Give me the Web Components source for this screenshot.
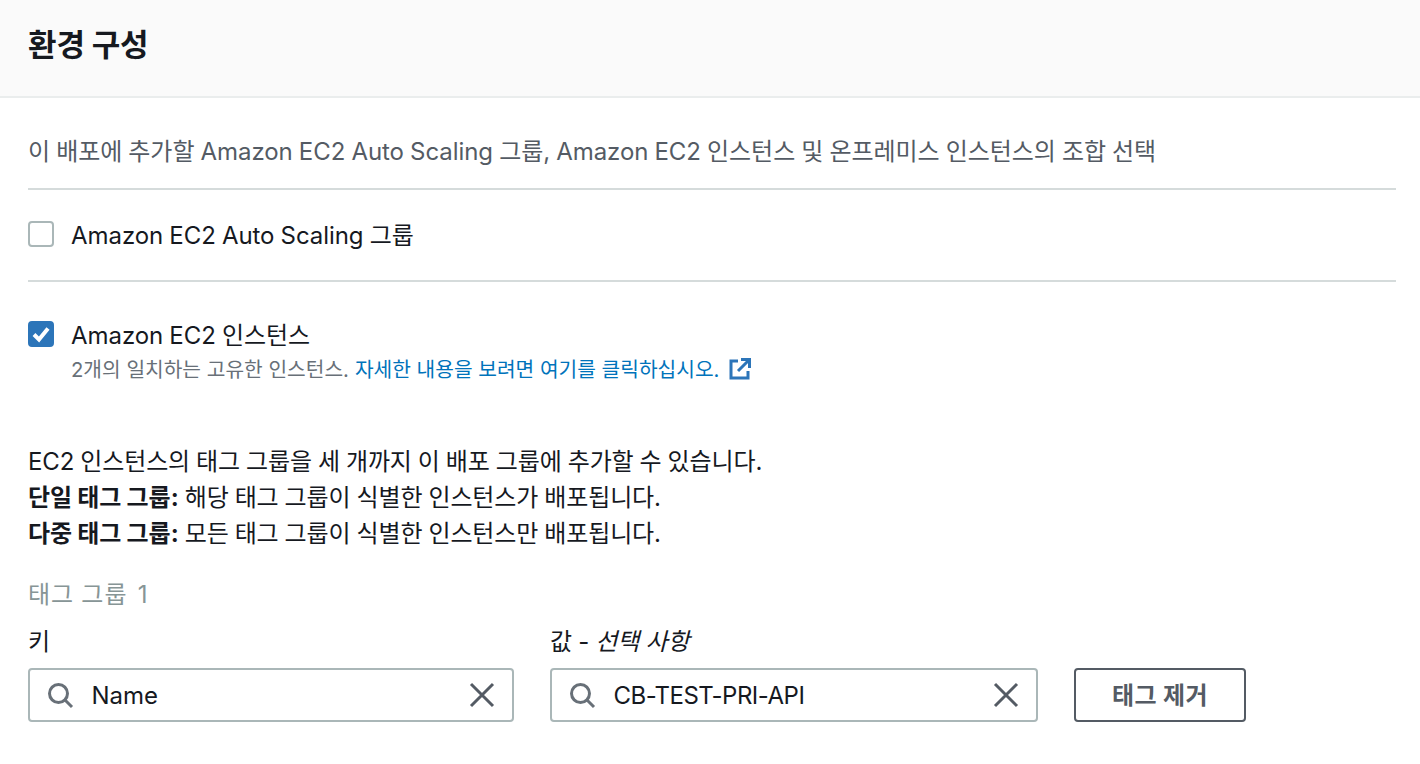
<!DOCTYPE html>
<html lang="ko">
<head>
<meta charset="utf-8">
<title>환경 구성</title>
<style>
  html, body { margin: 0; padding: 0; background: #fff; }
  body { font-family: "Inter", "Noto Sans CJK KR", sans-serif; color: #16191f; overflow: hidden; height: 764px;
         letter-spacing: -0.05px; word-spacing: -0.6px; }
</style>
</head>
<body>
<env-panel></env-panel>

<script>
const ICONS = {
  search: `<svg width="28" height="28" viewBox="0 0 28 28" fill="none" stroke="#687078" stroke-width="3"><circle cx="12.500" cy="12.500" r="9"/><path d="M19 19l7 7"/></svg>`,
  close: `<svg width="26" height="26" viewBox="0 0 26 26" fill="none" stroke="#545b64" stroke-width="3"><path d="M2 2l22 22M24 2L2 24"/></svg>`,
  external: `<svg width="24" height="24" viewBox="0 0 24 24" fill="none" stroke="#2c75b9" stroke-width="3"><path d="M10 4H3v17h17v-7"/><path d="M13 2.500h8.500V11"/><path d="M21 3L10 14"/></svg>`
};

class CheckRow extends HTMLElement {
  connectedCallback() {
    const on = this.hasAttribute("checked");
    if (!this.shadowRoot) this.attachShadow({ mode: "open" });
    this.shadowRoot.innerHTML = `<style>
      :host { display: flex; align-items: flex-start; gap: 17px; }
      .box { width: 26px; height: 26px; margin-top: 1px; box-sizing: border-box; border-radius: 4px; flex: none;
             border: 2px solid ${on ? "#2c75b9" : "#aab7b8"}; background: ${on ? "#2c75b9" : "#fff"}; }
      .box svg { display: block; margin: -2px; }
      .label { font-size: 24px; line-height: 32px; }
      ::slotted([slot=sub]) { display: block; }
    </style>
    <div class="box">${on ? `<svg width="26" height="26" viewBox="0 0 26 26" fill="none" stroke="#fff" stroke-width="4"><path d="M6 13.500l5 5 9-11"/></svg>` : ""}</div>
    <div><div class="label"><slot></slot></div><slot name="sub"></slot></div>`;
  }
}

class TagInput extends HTMLElement {
  connectedCallback() {
    if (!this.shadowRoot) this.attachShadow({ mode: "open" });
    this.shadowRoot.innerHTML = `<style>
      :host { display: flex; flex-direction: column; gap: 6px; width: 486px; }
      .lab { font-size: 24px; line-height: 32px; height: 36px; }
      .field { height: 54px; box-sizing: border-box; border: 2px solid #aab7b8; border-radius: 4px;
               display: flex; align-items: center; padding: 0 17px 0 16px; gap: 17.500px; }
      .field svg { display: block; flex: none; }
      .val { flex: 1; font-size: 24px; }
    </style>
    <div class="lab"><slot name="label"></slot></div>
    <div class="field">${ICONS.search}<span class="val"><slot></slot></span>${ICONS.close}</div>`;
  }
}

class EnvPanel extends HTMLElement {
  constructor() {
    super();
    this.attachShadow({ mode: "open" });
  }
  connectedCallback() {
    this.shadowRoot.innerHTML = `<style>
      :host { display: block; }
      header { height: 96px; background: #fafafa; border-bottom: 2px solid #eaeded;
               display: flex; align-items: center; padding: 0 28px; }
      h2 { margin: 0; font-size: 31px; font-weight: 700; position: relative; top: -6px; }
      main { padding: 0 24px 0 28px; }
      .intro { height: 92px; line-height: 108px; box-sizing: border-box; font-size: 24px; color: #545b64; border-bottom: 2px solid #d5dbdb; }
      .row1 { height: 92px; box-sizing: border-box; padding-top: 2px; display: flex; align-items: center; border-bottom: 2px solid #d5dbdb; }
      .row2 { padding-top: 38px; }
      .sub { font-size: 20.300px; line-height: 28px; margin-top: 4px; color: #687078; display: flex; align-items: center; letter-spacing: 0; word-spacing: 0; }
      .sub a { color: #0073bb; text-decoration: none; margin-left: 6px; }
      .sub svg { margin-left: 9px; margin-top: -2px; }
      .desc { margin-top: 60px; font-size: 24px; line-height: 36px; letter-spacing: -0.12px; }
      .desc b { letter-spacing: 0; }
      .group { margin-top: 25px; font-size: 24px; line-height: 36px; color: #879596; letter-spacing: 1px; }
      .group span { margin-left: 3px; }
      .tags { display: flex; align-items: flex-end; gap: 36px; margin-top: 13px; }
      button { width: 172px; height: 54px; box-sizing: border-box; background: #fff; border: 2px solid #545b64;
               border-radius: 4px; font: 700 24px "Inter", "Noto Sans CJK KR", sans-serif; color: #545b64; padding: 0 0 3px; letter-spacing: 0.4px; }
      i { font-style: italic; }
      .narrow { letter-spacing: -0.5px; }
    </style>
    <header><h2>환경 구성</h2></header>
    <main>
      <div class="intro">이 배포에 추가할 Amazon EC2 Auto Scaling 그룹, Amazon EC2 인스턴스 및 온프레미스 인스턴스의 조합 선택</div>
      <div class="row1"><check-row>Amazon EC2 Auto Scaling 그룹</check-row></div>
      <div class="row2">
        <check-row checked>Amazon EC2 인스턴스
          <div slot="sub" class="sub">2개의 일치하는 고유한 인스턴스.<a href="#">자세한 내용을 보려면 여기를 클릭하십시오.</a>${ICONS.external}</div>
        </check-row>
      </div>
      <div class="desc">EC2 인스턴스의 태그 그룹을 세 개까지 이 배포 그룹에 추가할 수 있습니다.<br>
        <b>단일 태그 그룹:</b> 해당 태그 그룹이 식별한 인스턴스가 배포됩니다.<br>
        <b>다중 태그 그룹:</b> 모든 태그 그룹이 식별한 인스턴스만 배포됩니다.</div>
      <div class="group">태그 그룹 <span>1</span></div>
      <div class="tags">
        <tag-input><span slot="label">키</span>Name</tag-input>
        <tag-input style="width:488px"><span slot="label">값 - <i>선택 사항</i></span><span class="narrow">CB-TEST-PRI-API</span></tag-input>
        <button>태그 제거</button>
      </div>
    </main>`;
  }
}

customElements.define("check-row", CheckRow);
customElements.define("tag-input", TagInput);
customElements.define("env-panel", EnvPanel);
</script>
</body>
</html>
